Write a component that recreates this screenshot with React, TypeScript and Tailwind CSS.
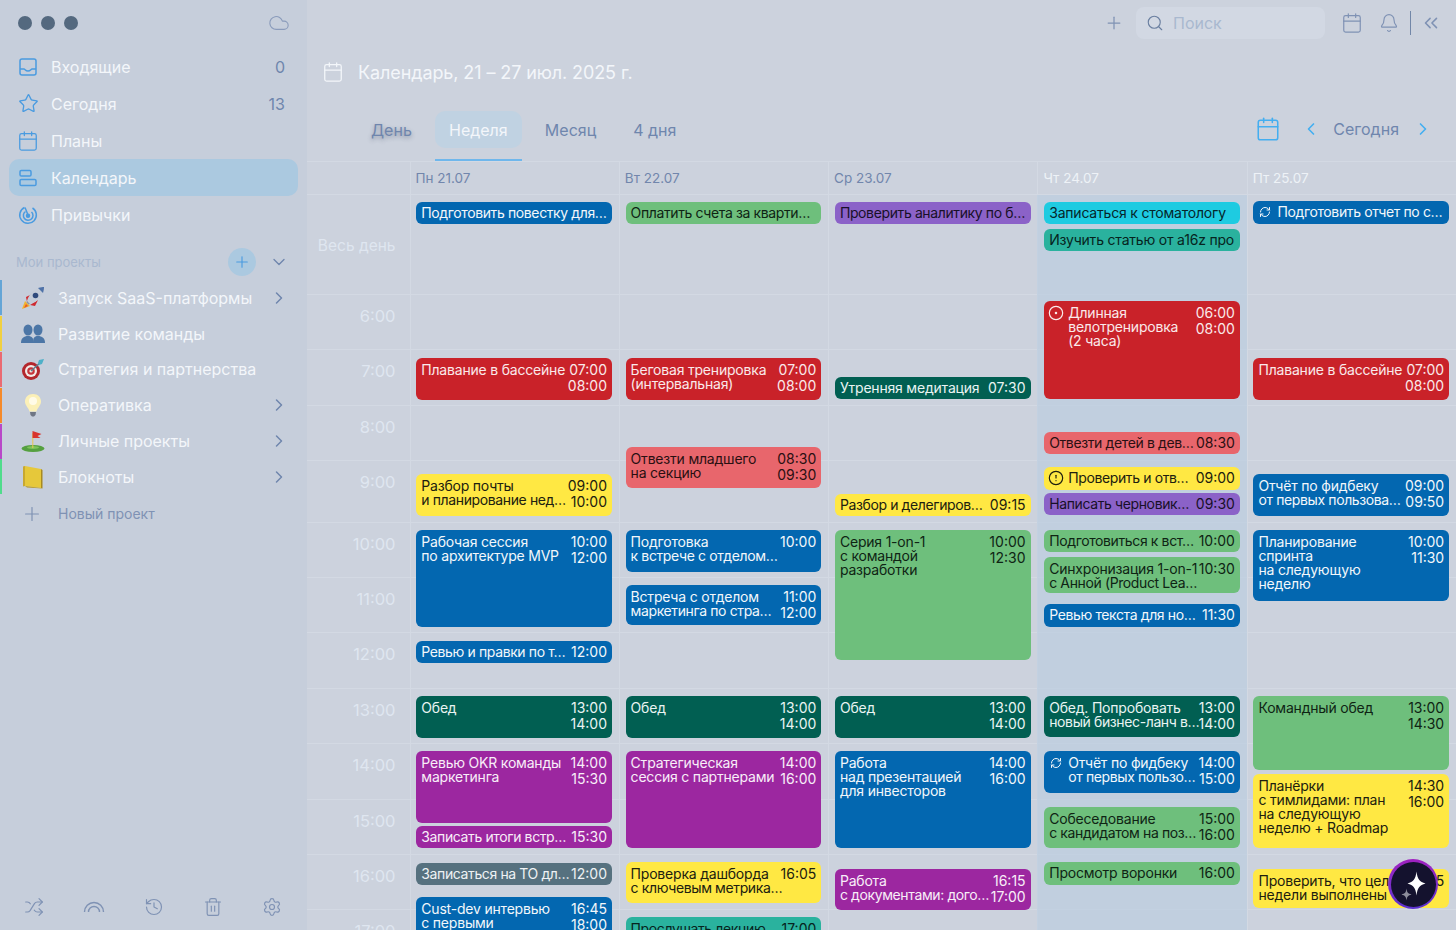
import { Bell, Calendar, ChevronDown, ChevronLeft, ChevronRight, ChevronsLeft, CircleAlert, CircleDot, Cloud, History, Plus, RefreshCw, Search, Settings, Shuffle, Star, Trash2 } from "lucide-react";
import type { ReactNode } from "react";

type Ev = { top: number; h: number; c: string; lines: string[]; times?: string[]; icon?: "sync" | "dot" | "alert" };

const blue = "bg-[#0367b0] text-[#f2f7fb]";
const red = "bg-[#c92229] text-[#fae9ea]";
const yellow = "bg-[#ffe843] text-[#20200f]";
const green = "bg-[#6ebf7c] text-[#0f2414]";
const dark = "bg-[#015f52] text-[#e9f4f2]";
const purple = "bg-[#9c27a0] text-[#f8eef8]";
const salmon = "bg-[#e8666c] text-[#2a1012]";
const cyan = "bg-[#1ecbe1] text-[#06262b]";
const teal = "bg-[#2ab29e] text-[#062420]";
const violet = "bg-[#8b62c8] text-[#181028]";
const slate = "bg-[#56717f] text-[#eef2f4]";

const columns: Ev[][] = [
  [
    { top: 202, h: 22, c: blue, lines: ["Подготовить повестку для…"] },
    { top: 358, h: 42, c: red, lines: ["Плавание в бассейне"], times: ["07:00", "08:00"] },
    { top: 474, h: 42, c: yellow, lines: ["Разбор почты", "и планирование нед…"], times: ["09:00", "10:00"] },
    { top: 530, h: 97, c: blue, lines: ["Рабочая сессия", "по архитектуре MVP"], times: ["10:00", "12:00"] },
    { top: 641, h: 22, c: blue, lines: ["Ревью и правки по т…"], times: ["12:00"] },
    { top: 696, h: 42, c: dark, lines: ["Обед"], times: ["13:00", "14:00"] },
    { top: 751, h: 72, c: purple, lines: ["Ревью OKR команды", "маркетинга"], times: ["14:00", "15:30"] },
    { top: 826, h: 22, c: purple, lines: ["Записать итоги встр…"], times: ["15:30"] },
    { top: 863, h: 22, c: slate, lines: ["Записаться на ТО дл…"], times: ["12:00"] },
    { top: 897, h: 70, c: blue, lines: ["Cust-dev интервью", "с первыми"], times: ["16:45", "18:00"] },
  ],
  [
    { top: 202, h: 22, c: green, lines: ["Оплатить счета за кварти…"] },
    { top: 358, h: 42, c: red, lines: ["Беговая тренировка", "(интервальная)"], times: ["07:00", "08:00"] },
    { top: 447, h: 41, c: salmon, lines: ["Отвезти младшего", "на секцию"], times: ["08:30", "09:30"] },
    { top: 530, h: 42, c: blue, lines: ["Подготовка", "к встрече с отделом…"], times: ["10:00"] },
    { top: 585, h: 40, c: blue, lines: ["Встреча с отделом", "маркетинга по стра…"], times: ["11:00", "12:00"] },
    { top: 696, h: 42, c: dark, lines: ["Обед"], times: ["13:00", "14:00"] },
    { top: 751, h: 97, c: purple, lines: ["Стратегическая", "сессия с партнерами"], times: ["14:00", "16:00"] },
    { top: 862, h: 41, c: yellow, lines: ["Проверка дашборда", "с ключевым метрика…"], times: ["16:05"] },
    { top: 917, h: 40, c: teal, lines: ["Прослушать лекцию…"], times: ["17:00"] },
  ],
  [
    { top: 202, h: 22, c: violet, lines: ["Проверить аналитику по б…"] },
    { top: 377, h: 22, c: dark, lines: ["Утренняя медитация"], times: ["07:30"] },
    { top: 494, h: 22, c: yellow, lines: ["Разбор и делегиров…"], times: ["09:15"] },
    { top: 530, h: 130, c: green, lines: ["Серия 1-on-1", "с командой", "разработки"], times: ["10:00", "12:30"] },
    { top: 696, h: 42, c: dark, lines: ["Обед"], times: ["13:00", "14:00"] },
    { top: 751, h: 97, c: blue, lines: ["Работа", "над презентацией", "для инвесторов"], times: ["14:00", "16:00"] },
    { top: 869, h: 41, c: purple, lines: ["Работа", "с документами: дого…"], times: ["16:15", "17:00"] },
  ],
  [
    { top: 202, h: 22, c: cyan, lines: ["Записаться к стоматологу"] },
    { top: 229, h: 22, c: teal, lines: ["Изучить статью от a16z про"] },
    { top: 301, h: 98, c: red, icon: "dot", lines: ["Длинная", "велотренировка", "(2 часа)"], times: ["06:00", "08:00"] },
    { top: 432, h: 22, c: salmon, lines: ["Отвезти детей в дев…"], times: ["08:30"] },
    { top: 467, h: 23, c: yellow, icon: "alert", lines: ["Проверить и отв…"], times: ["09:00"] },
    { top: 493, h: 22, c: violet, lines: ["Написать черновик…"], times: ["09:30"] },
    { top: 530, h: 22, c: green, lines: ["Подготовиться к вст…"], times: ["10:00"] },
    { top: 557, h: 36, c: green, lines: ["Синхронизация 1-on-1", "с Анной (Product Lea…"], times: ["10:30"] },
    { top: 604, h: 23, c: blue, lines: ["Ревью текста для но…"], times: ["11:30"] },
    { top: 696, h: 41, c: dark, lines: ["Обед. Попробовать", "новый бизнес-ланч в…"], times: ["13:00", "14:00"] },
    { top: 751, h: 42, c: blue, icon: "sync", lines: ["Отчёт по фидбеку", "от первых пользо…"], times: ["14:00", "15:00"] },
    { top: 807, h: 41, c: green, lines: ["Собеседование", "с кандидатом на поз…"], times: ["15:00", "16:00"] },
    { top: 862, h: 23, c: green, lines: ["Просмотр воронки"], times: ["16:00"] },
  ],
  [
    { top: 201, h: 23, c: blue, icon: "sync", lines: ["Подготовить отчет по с…"] },
    { top: 358, h: 42, c: red, lines: ["Плавание в бассейне"], times: ["07:00", "08:00"] },
    { top: 474, h: 42, c: blue, lines: ["Отчёт по фидбеку", "от первых пользова…"], times: ["09:00", "09:50"] },
    { top: 530, h: 71, c: blue, lines: ["Планирование", "спринта", "на следующую", "неделю"], times: ["10:00", "11:30"] },
    { top: 696, h: 74, c: green, lines: ["Командный обед"], times: ["13:00", "14:30"] },
    { top: 774, h: 74, c: yellow, lines: ["Планёрки", "с тимлидами: план", "на следующую", "неделю + Roadmap"], times: ["14:30", "16:00"] },
    { top: 869, h: 39, c: yellow, lines: ["Проверить, что цели", "недели выполнены"], times: ["16:15"] },
  ],
];

const hours: [string, string][] = [
  ["6:00", "h-[55px]"],
  ["7:00", "h-[56px]"],
  ["8:00", "h-[55px]"],
  ["9:00", "h-[62px]"],
  ["10:00", "h-[55px]"],
  ["11:00", "h-[55px]"],
  ["12:00", "h-[56px]"],
  ["13:00", "h-[55px]"],
  ["14:00", "h-[56px]"],
  ["15:00", "h-[55px]"],
  ["16:00", "h-[55px]"],
  ["17:00", "h-[55px]"],
];

const days = ["Пн 21.07", "Вт 22.07", "Ср 23.07", "Чт 24.07", "Пт 25.07"];

function EventCard({ ev }: { ev: Ev }) {
  const short = ev.h <= 24;
  return (
    <div
      className={`absolute left-[6.8px] right-[6.8px] flex gap-1 overflow-hidden rounded-[6px] pl-[5px] pr-[5px] text-[14px] ${ev.c} ${short ? "pt-1" : "pt-[5px]"}`}
      style={{ top: ev.top - 161, height: ev.h }}
    >
      {ev.icon === "sync" && <RefreshCw size={12} strokeWidth={2} className="mr-[2px] ml-[1px] mt-[1px] shrink-0" />}
      {ev.icon === "dot" && <CircleDot size={16} strokeWidth={1.8} className="-ml-px -mt-px shrink-0" />}
      {ev.icon === "alert" && <CircleAlert size={16} strokeWidth={1.8} className="-ml-px -mt-px shrink-0" />}
      <div className="min-w-0 flex-1 leading-[14px]">
        {ev.lines.map((l) => (
          <div key={l} className={`whitespace-nowrap ${l.endsWith("…") ? "tracking-[-0.38px]" : "tracking-[-0.2px]"}`}>{l}</div>
        ))}
      </div>
      {ev.times && (
        <div className="shrink-0 text-right text-[14px] leading-[16px] -mt-px">
          {ev.times.map((t) => (
            <div key={t}>{t}</div>
          ))}
        </div>
      )}
    </div>
  );
}

function NavRow({ icon, label, count, active }: { icon: ReactNode; label: string; count?: string; active?: boolean }) {
  return (
    <div className={`mx-[9px] flex h-[37px] items-center rounded-[10px] pl-[10px] pr-[13px] ${active ? "bg-[#abc9e0]" : ""}`}>
      <div className="flex w-[32px] shrink-0 text-[#4a9be0]">{icon}</div>
      <span className="flex-1 text-[16px] text-[#f3f6fa]">{label}</span>
      {count && <span className="text-[16px] text-[#6f86ad]">{count}</span>}
    </div>
  );
}

function Rocket() {
  return (
    <svg width="24" height="24" viewBox="0 0 24 24">
      <path d="M1 23l3-8 5 5z" fill="#f2b22e" />
      <path d="M3 22l2-4 2 2z" fill="#e8562a" />
      <path d="M5 11l6-3-5 8z" fill="#cf2a30" />
      <path d="M14 20l3-6-8 5z" fill="#cf2a30" />
      <path d="M6 15C8 7 15 1 23 1c0 8-6 15-14 17z" fill="#c4ccd8" />
      <path d="M17 2c3-.8 4.500-1 6-1 0 1.500-.2 3-1 6z" fill="#4f72a8" />
      <circle cx="14.500" cy="9.500" r="2.800" fill="#2f4a7c" />
      <path d="M6 15l3 3-1.500.5-2-2z" fill="#8a93a6" />
    </svg>
  );
}

function People() {
  return (
    <svg width="24" height="22" viewBox="0 0 24 22" fill="#4c76a6">
      <ellipse cx="7" cy="7" rx="4.500" ry="5.500" />
      <ellipse cx="17" cy="7" rx="4.500" ry="5.500" />
      <path d="M0 20c0-5 3-7 7-7s6 2 5 7z" />
      <path d="M12 20c0-5 1-7 5-7s7 2 7 7z" />
    </svg>
  );
}

function Target() {
  return (
    <svg width="24" height="24" viewBox="0 0 24 24">
      <circle cx="10" cy="14" r="9" fill="#b3262c" />
      <circle cx="10" cy="14" r="6" fill="#f2ece8" />
      <circle cx="10" cy="14" r="3.800" fill="#c5343a" />
      <circle cx="10" cy="14" r="1.600" fill="#f2ece8" />
      <path d="M10 14L20 5" stroke="#5a7f90" strokeWidth="1.500" />
      <path d="M18 3l5-1-2 5-3 1-1-2z" fill="#4eb0c8" />
    </svg>
  );
}

function Bulb() {
  return (
    <svg width="20" height="24" viewBox="0 0 20 24">
      <path d="M10 1c5 0 8 3.500 8 7.500 0 4-3.500 6-4.500 10h-7C5.500 14.500 2 12.500 2 8.500 2 4.500 5 1 10 1z" fill="#fbf0b8" />
      <circle cx="10" cy="8" r="4" fill="#fffbe8" />
      <path d="M7 19h6l-.5 3-1.500 1.500H9L7.500 22z" fill="#6f7684" />
    </svg>
  );
}

function Golf() {
  return (
    <svg width="24" height="24" viewBox="0 0 24 24">
      <ellipse cx="12" cy="19.500" rx="11.500" ry="3.500" fill="#55a040" />
      <ellipse cx="12" cy="18.500" rx="6" ry="1.500" fill="#7fc45a" />
      <path d="M11.300 4h1v15h-1z" fill="#e8c850" />
      <path d="M11.500 2l9 3-4 2 3 2h-8z" fill="#d8342e" />
    </svg>
  );
}

function Notebook() {
  return (
    <svg width="22" height="24" viewBox="0 0 22 24">
      <path d="M4 1l16 3v19L4 21z" fill="#e6c83a" />
      <path d="M20 4l1.500 1v18.500L20 23z" fill="#a88a20" />
      <path d="M2 1.500L4 1v20l-2 .5z" fill="#c8a830" />
      <path d="M4 21l16 2 1.500.5L6 22.500z" fill="#b89a28" />
    </svg>
  );
}

function Project({ bar, icon, label, arrow }: { bar: string; icon: ReactNode; label: string; arrow?: boolean }) {
  return (
    <div className="flex h-[35.8px] items-center">
      <div className={`h-[35px] w-[2px] shrink-0 ${bar}`} />
      <div className="ml-[19px] flex w-[37px] shrink-0">{icon}</div>
      <span className="flex-1 text-[16px] text-[#f3f6fa]">{label}</span>
      {arrow && <ChevronRight size={20} strokeWidth={1.8} className="mr-[18px] text-[#6f86ad]" />}
    </div>
  );
}

function CalendarBars() {
  return (
    <svg width="18" height="18" viewBox="0 0 18 18" fill="none" stroke="currentColor" strokeWidth="1.500">
      <rect x="1" y="1.500" width="11" height="5.500" rx="1.300" />
      <rect x="1" y="10.500" width="16" height="6" rx="1.300" />
    </svg>
  );
}

function InboxIcon() {
  return (
    <svg width="18" height="18" viewBox="0 0 18 18" fill="none" stroke="currentColor" strokeWidth="1.500">
      <rect x="1" y="1" width="16" height="16" rx="2" />
      <path d="M1 11h4c1 0 1.500 2 4 2s3-2 4-2h4" />
    </svg>
  );
}

function HabitIcon() {
  return (
    <svg width="20" height="20" viewBox="0 0 20 20" fill="none" stroke="currentColor" strokeWidth="1.500" className="-ml-px">
      <path d="M6.500 2.500A8.300 8.300 0 1 0 14.500 3" />
      <path d="M7.500 6.500A4.800 4.800 0 1 0 13.500 7" />
      <circle cx="10" cy="10.800" r="1.500" fill="currentColor" />
      <path d="M7 2.500L10 10" />
    </svg>
  );
}

function ArcsIcon() {
  return (
    <svg width="22" height="22" viewBox="0 0 22 22" fill="none" stroke="currentColor" strokeWidth="1.400">
      <path d="M1.500 15a9.500 9.500 0 0 1 19 0" />
      <path d="M5.500 15a5.500 5.500 0 0 1 11 0" />
    </svg>
  );
}

function Sparkle() {
  return (
    <svg width="45" height="45" viewBox="2.500 2.500 45 45">
      <path d="M28 12c1 8 3 10 9 12-6 2-8 4-9 12-1-8-3-10-9-12 6-2 8-4 9-12z" fill="#ffffff" />
      <path d="M18 29c.5 4 1.500 5 5 6-3.500 1-4.500 2-5 6-.5-4-1.500-5-5-6 3.500-1 4.500-2 5-6z" fill="#8d8d9c" />
    </svg>
  );
}

export default function App() {
  return (
    <div className="flex h-[930px] w-[1456px] overflow-hidden bg-[#ccd2dd] font-['Inter',sans-serif]">
      <aside className="flex w-[307px] shrink-0 flex-col bg-[#c6cedb]">
        <div className="flex h-[46px] shrink-0 items-center justify-between pl-[18px] pr-[17px]">
          <div className="flex gap-[9px]">
            <div className="h-[14px] w-[14px] rounded-full bg-[#54697f]" />
            <div className="h-[14px] w-[14px] rounded-full bg-[#54697f]" />
            <div className="h-[14px] w-[14px] rounded-full bg-[#54697f]" />
          </div>
          <Cloud size={22} strokeWidth={1.2} className="text-[#8a9bbb]" />
        </div>
        <div className="flex flex-col pt-[2px]">
          <NavRow icon={<InboxIcon />} label="Входящие" count="0" />
          <NavRow icon={<Star size={21} strokeWidth={1.5} className="-ml-px" />} label="Сегодня" count="13" />
          <NavRow icon={<Calendar size={22} strokeWidth={1.4} className="-ml-[2px]" />} label="Планы" />
          <NavRow icon={<CalendarBars />} label="Календарь" active />
          <NavRow icon={<HabitIcon />} label="Привычки" />
        </div>
        <div className="mt-[11px] flex h-[36px] items-center pl-[16px] pr-[18px]">
          <span className="flex-1 pt-px text-[13px] text-[#a9b8cf]">Мои проекты</span>
          <div className="flex h-[28px] w-[28px] items-center justify-center rounded-full bg-[#abc9e0]">
            <Plus size={18} strokeWidth={1.5} className="text-[#4a9be0]" />
          </div>
          <ChevronDown size={20} strokeWidth={1.6} className="ml-[13px] text-[#6f86ad]" />
        </div>
        <div className="flex flex-col">
          <Project bar="bg-[#64a5d6]" icon={<Rocket />} label="Запуск SaaS-платформы" arrow />
          <Project bar="bg-[#f0d040]" icon={<People />} label="Развитие команды" />
          <Project bar="bg-[#ea6a72]" icon={<Target />} label="Стратегия и партнерства" />
          <Project bar="bg-[#f58a2a]" icon={<div className="ml-[2px]"><Bulb /></div>} label="Оперативка" arrow />
          <Project bar="bg-[#b848c8]" icon={<Golf />} label="Личные проекты" arrow />
          <Project bar="bg-[#50dc8c]" icon={<Notebook />} label="Блокноты" arrow />
        </div>
        <div className="flex h-[38px] items-center pl-[21px]">
          <div className="flex w-[37px]"><Plus size={22} strokeWidth={1.3} className="text-[#7f92b4]" /></div>
          <span className="text-[14px] text-[#7f92b4]">Новый проект</span>
        </div>
        <div className="mt-auto flex h-[33px] items-start justify-between pl-[24px] pr-[25px] text-[#7f92b4]">
          <Shuffle size={20} strokeWidth={1.4} />
          <ArcsIcon />
          <History size={20} strokeWidth={1.4} />
          <Trash2 size={20} strokeWidth={1.4} />
          <Settings size={20} strokeWidth={1.4} />
        </div>
      </aside>

      <main className="relative flex min-w-0 flex-1 flex-col">
        <div className="flex h-[46px] shrink-0 items-center justify-end pr-[14px] text-[#7f92b4]">
          <Plus size={20} strokeWidth={1.5} />
          <div className="ml-[12px] flex h-[32px] w-[189px] items-center rounded-[8px] bg-[#d2d8e3] pl-[10px]">
            <Search size={18} strokeWidth={1.5} className="text-[#6a7fa0]" />
            <span className="ml-[9px] text-[16px] text-[#a9b8cf]">Поиск</span>
          </div>
          <Calendar size={22} strokeWidth={1.3} className="ml-[16px]" />
          <Bell size={20} strokeWidth={1.4} className="ml-[16px]" />
          <div className="ml-[11px] h-[24px] w-px bg-[#7287a8]" />
          <ChevronsLeft size={22} strokeWidth={1.7} className="ml-[9px]" />
        </div>
        <div className="flex h-[52px] shrink-0 items-center pl-[15px]">
          <Calendar size={22} strokeWidth={1.4} className="text-[#f3f6fa]" />
          <span className="ml-[14px] text-[18px] tracking-[-0.1px] text-[#f3f6fa]">Календарь, 21 – 27 июл. 2025 г.</span>
        </div>
        <div className="flex h-[63px] shrink-0 items-start pt-[13px] pl-[64px] pr-[23px]">
          <span className="mt-[7px] text-[16px] text-[#6f86ad] [text-shadow:0_2px_4px_rgba(60,70,100,0.45)]">День</span>
          <div className="ml-[23px] flex h-[50px] w-[87px] flex-col items-center">
            <div className="flex h-[37px] w-full items-center justify-center rounded-[10px] bg-[#c0d2e2] text-[16px] text-[#f3f6fa]">Неделя</div>
            <div className="mt-auto h-[2px] w-full bg-[#6fb7ec]" />
          </div>
          <span className="ml-[23px] mt-[7px] text-[16px] text-[#6f86ad]">Месяц</span>
          <span className="ml-[37px] mt-[7px] text-[16px] text-[#6f86ad]">4 дня</span>
          <div className="ml-auto mt-[5px] flex items-center text-[#44aef0]">
            <Calendar size={26} strokeWidth={1.4} />
            <ChevronLeft size={20} strokeWidth={2} className="ml-[20px]" />
            <span className="ml-[12px] text-[16px] text-[#6f86ad]">Сегодня</span>
            <ChevronRight size={20} strokeWidth={2} className="ml-[14px]" />
          </div>
        </div>

        <div className="relative min-h-0 flex-1 overflow-hidden">
          <div className="grid h-[34px] grid-cols-[102.5px_repeat(5,1fr)] border-t border-[#d3d9e3] border-b">
            <div />
            {days.map((d, i) => (
              <div key={d} className={`border-l border-[#d3d9e3] pl-[5px] pt-[8px] text-[13.5px] leading-[17px] ${i < 3 ? "text-[#7186ac]" : "text-[#eef2f7]"}`}>{d}</div>
            ))}
          </div>
          <div className="grid h-[99px] grid-cols-[102.5px_repeat(5,1fr)]">
            <div className="flex items-center justify-end pr-[14px] pt-[3px] text-[15.5px] text-[#dfe6f0]">Весь день</div>
            {days.map((d) => (
              <div key={d} className="border-l border-[#d3d9e3]" />
            ))}
          </div>
          {hours.map(([label, h]) => (
            <div key={label} className={`grid grid-cols-[102.5px_repeat(5,1fr)] border-t border-[#d3d9e3] ${h}`}>
              <div className="pr-[14px] pt-[10px] text-right text-[16.5px] leading-[22px] text-[#dfe6f0]">{label}</div>
              {days.map((d) => (
                <div key={d} className="border-l border-[#d3d9e3]" />
              ))}
            </div>
          ))}
          <div className="absolute inset-0 grid grid-cols-[102.5px_repeat(5,1fr)]">
            <div />
            {columns.map((evs, i) => (
              <div key={days[i]} className={`relative ${i === 3 ? "mt-[34px] bg-[#bccde0]/70 -mb-[34px]" : ""}`}>
                <div className={`absolute inset-x-0 bottom-0 ${i === 3 ? "-top-[34px]" : "top-0"}`}>
                  {evs.map((ev) => (
                    <EventCard key={ev.top} ev={ev} />
                  ))}
                </div>
              </div>
            ))}
          </div>
        </div>

        <div className="absolute bottom-[21px] right-[18px] flex h-[50px] w-[50px] items-center justify-center rounded-full bg-gradient-to-b from-[#a020c0] to-[#5a30d0]">
          <div className="flex h-[45px] w-[45px] items-center justify-center rounded-full bg-[#14122e]">
            <Sparkle />
          </div>
        </div>
      </main>
    </div>
  );
}
